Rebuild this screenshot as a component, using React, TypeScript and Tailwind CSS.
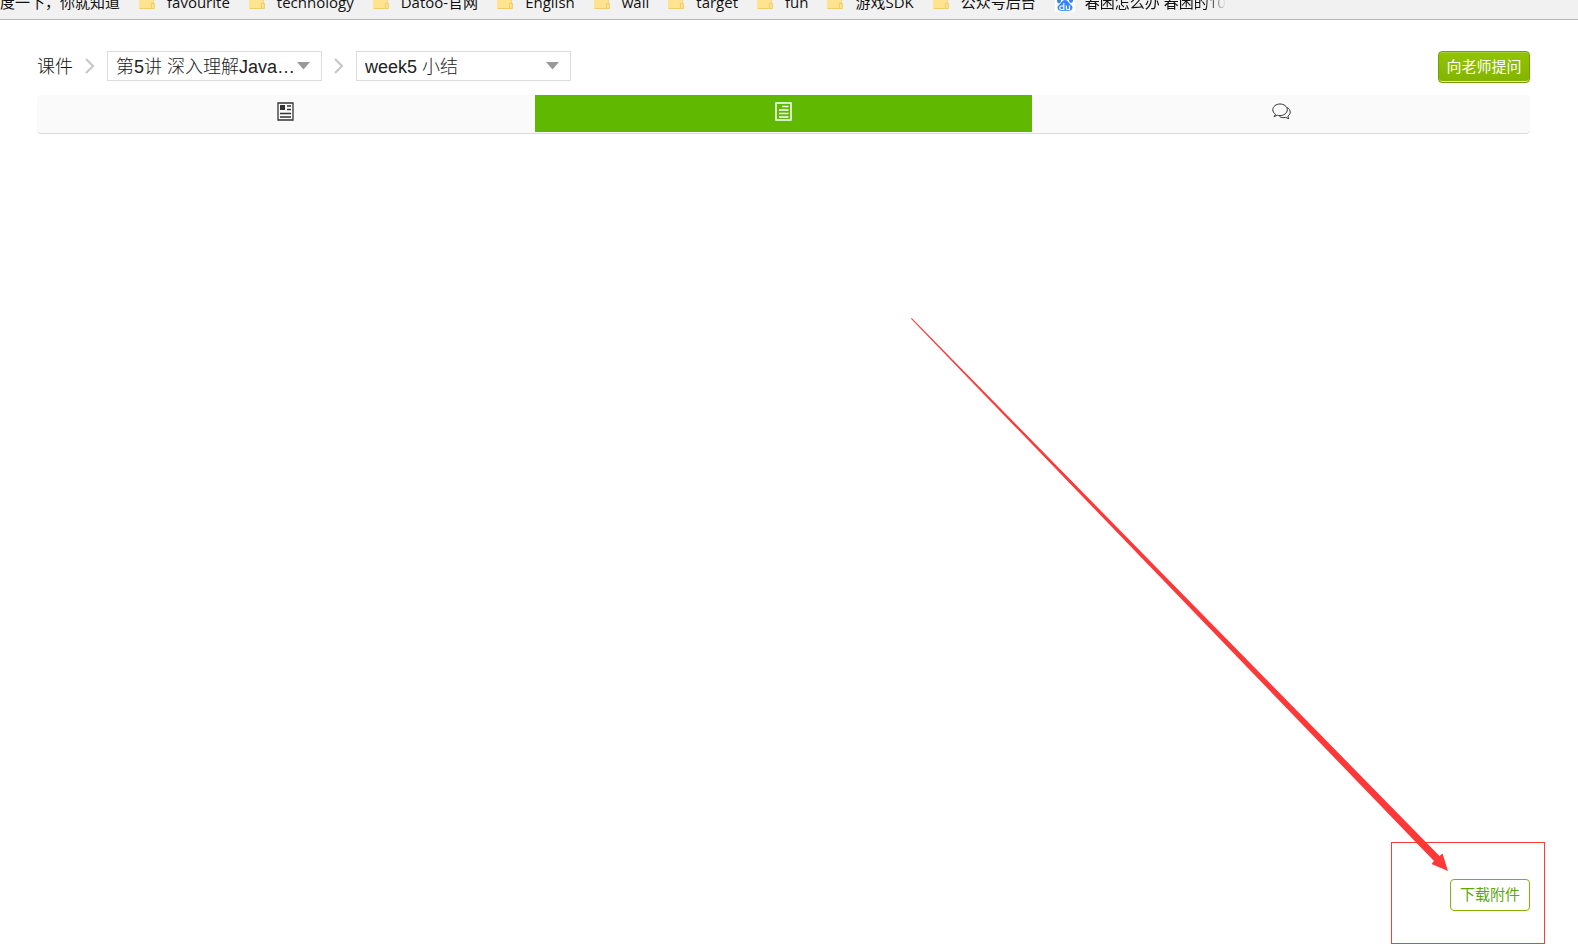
import React from "react";

const bookmarks = [
  "favourite",
  "technology",
  "Datoo-官网",
  "English",
  "wall",
  "target",
  "fun",
  "游戏SDK",
  "公众号后台",
];

function FolderIcon() {
  return (
    <svg width="16" height="14" viewBox="0 0 16 14" className="shrink-0" aria-hidden="true">
      <path d="M0 1.500A1 1 0 0 1 1 .5h13.500v7.500H16v5a1 1 0 0 1-1 1H1a1 1 0 0 1-1-1z" fill="#ffe391" />
      <path d="M.5 13.500h14.800V8.500h-2.800v4.500" fill="none" stroke="#f0cd66" />
      <path d="M14.500 0v8" stroke="#f5d577" />
    </svg>
  );
}

function BaiduIcon() {
  return (
    <svg width="20" height="20" viewBox="0 0 20 20" className="shrink-0" aria-hidden="true">
      <path d="M0 0h20v20H0z" fill="#fff" />
      <g fill="#3385ff">
        <ellipse cx="7" cy="4" rx="2" ry="3" />
        <ellipse cx="13" cy="4" rx="2" ry="3" />
        <ellipse cx="4" cy="9" rx="2" ry="2.400" />
        <ellipse cx="16" cy="8.500" rx="2" ry="2.400" />
        <path d="M10 8c2.500 0 3 2 5 4 2 1.500 3 3 2.300 4.500-.8 2.500-3.300 2.500-7.300 2.300-4 .2-6.500.2-7.300-2.300-.7-1.500.3-3 2.300-4.500 2-2 2.500-4 5-4z" />
      </g>
      <path d="M8.800 11v6.500H6.500a1.500 1.500 0 0 1 0-3.500h2M11.300 13.500v2.700c0 .8.500 1.300 1.300 1.300h1.900v-4" fill="none" stroke="#fff" strokeWidth="1.200" />
    </svg>
  );
}

function BookmarkBar() {
  return (
    <nav
      aria-label="书签"
      className="flex h-5 items-end overflow-hidden border-b border-[#b4b4b4] bg-[#f1f1f1] font-['Open_Sans','Noto_Sans_CJK_SC',sans-serif] text-[15px] text-[#111]"
    >
      <div className="flex h-[34px] shrink-0 items-center gap-[19px] whitespace-nowrap">
        <a href="#" className="leading-8">度一下，你就知道</a>
        {bookmarks.map((name) => (
          <a key={name} href="#" className="flex items-center gap-3 leading-8">
            <FolderIcon />
            {name}
          </a>
        ))}
        <a href="#" className="flex items-center gap-[10px] leading-8">
          <BaiduIcon />
          <span className="bg-linear-to-r from-[#111] from-85% to-[#f1f1f1] bg-clip-text text-transparent">
            春困怎么办 春困的10
          </span>
        </a>
      </div>
    </nav>
  );
}

function Chevron() {
  return (
    <svg width="10" height="16" viewBox="0 0 10 16" className="shrink-0" aria-hidden="true">
      <path d="M1 1l7 7-7 7" fill="none" stroke="#c8c8c8" strokeWidth="2.200" />
    </svg>
  );
}

function Picker({ label, value }: { label: string; value: string }) {
  return (
    <div className="grid w-[215px] items-center">
      <select
        aria-label={label}
        className="col-start-1 row-start-1 h-[30px] w-full appearance-none border border-[#dcdcdc] bg-white pt-px pr-6 pl-2 text-lg leading-7 font-light text-[#222]"
      >
        <option>{value}</option>
      </select>
      <svg
        width="13"
        height="8"
        viewBox="0 0 13 8"
        className="pointer-events-none col-start-1 row-start-1 mr-3 mb-px justify-self-end"
        aria-hidden="true"
      >
        <path d="M0 0h13L6.500 7.500z" fill="#999" />
      </svg>
    </div>
  );
}

function NewsIcon() {
  return (
    <svg width="17" height="19" viewBox="0 0 17 19" aria-hidden="true">
      <path d="M1 1h15v17H1z" fill="none" stroke="#333" strokeWidth="1.300" />
      <path d="M3 3h5v5H3z" fill="#333" />
      <path d="M10 4h4M10 7.500h4M3 11.500h11M3 15h11" stroke="#333" strokeWidth="1.700" />
    </svg>
  );
}

function DocumentIcon() {
  return (
    <svg width="17" height="19" viewBox="0 0 17 19" aria-hidden="true">
      <path d="M1 1h15v17H1z" fill="none" stroke="#fff" strokeWidth="1.500" />
      <path d="M7 4.500h6.500M4 8h9.500M4 11.500h9.500M4 15h9.500" stroke="#fff" strokeWidth="1.700" />
    </svg>
  );
}

function ChatIcon() {
  return (
    <svg width="19" height="17" viewBox="0 0 19 17" fill="none" stroke="#333" aria-hidden="true">
      <path d="M3.500 11.300C1.700 10.200.8 8.500.8 6.800.8 3.500 4 1 8 1s7.300 2.500 7.300 5.800S12 12.600 8 12.600c-1 0-1.800-.1-2.600-.4L2 13.600z" />
      <path d="M15 4.500c2 1 3.200 2.700 3.200 4.600 0 1.700-.8 3-2.300 4l.8 2.600-3.200-1.300c-2.500.5-4.500.1-6-.9" />
    </svg>
  );
}

export default function App() {
  return (
    <div className="relative flex min-h-screen flex-col bg-white font-['Liberation_Sans','Noto_Sans_CJK_SC',sans-serif] text-[#333]">
      <BookmarkBar />

      <main className="flex grow flex-col pt-[31px] pr-12 pl-[37px]">
        <header className="flex items-start justify-between">
          <div className="flex h-[30px] items-center gap-3">
            <a href="#" className="pt-px text-lg leading-7 font-light text-[#111]">课件</a>
            <Chevron />
            <Picker label="讲次" value="第5讲 深入理解Java…" />
            <Chevron />
            <Picker label="课时" value="week5 小结" />
          </div>
          <button className="h-8 w-[92px] rounded border border-[#6f9f00] bg-linear-to-b from-[#93c400] to-[#82b400] text-[15px] leading-7 text-white shadow-[inset_0_1px_0_#a8d035,inset_0_-1px_0_#e4f2bd]">
            向老师提问
          </button>
        </header>

        <div role="tablist" className="mt-3 grid grid-cols-3 overflow-hidden rounded border-b border-[#dcdcdc] bg-[#fafafa] pb-px">
          <button role="tab" aria-label="资讯" className="flex h-[37px] items-center justify-center pb-1">
            <NewsIcon />
          </button>
          <button role="tab" aria-label="文档" aria-selected="true" className="flex h-[37px] items-center justify-center bg-[#60b800] pb-1">
            <DocumentIcon />
          </button>
          <button role="tab" aria-label="讨论" className="flex h-[37px] items-center justify-center pb-1">
            <ChatIcon />
          </button>
        </div>

        <footer className="mt-auto flex justify-end pb-[37px]">
          <button className="h-8 w-20 rounded border border-[#7fb400] bg-white text-[15px] leading-7 text-[#5ea60c]">
            下载附件
          </button>
        </footer>
      </main>

      <div className="pointer-events-none absolute right-[33px] bottom-1 h-[102px] w-[154px] border border-[#fc3b3b]" />
      <svg
        width="538"
        height="554"
        viewBox="0 0 538 554"
        className="pointer-events-none absolute right-[129px] bottom-[76px]"
        aria-hidden="true"
      >
        <path d="M0 .7L.7 0L528.500 538l3-2.500L537 553l-16.500-7 2.500-3z" fill="#fc3838" />
      </svg>
    </div>
  );
}
